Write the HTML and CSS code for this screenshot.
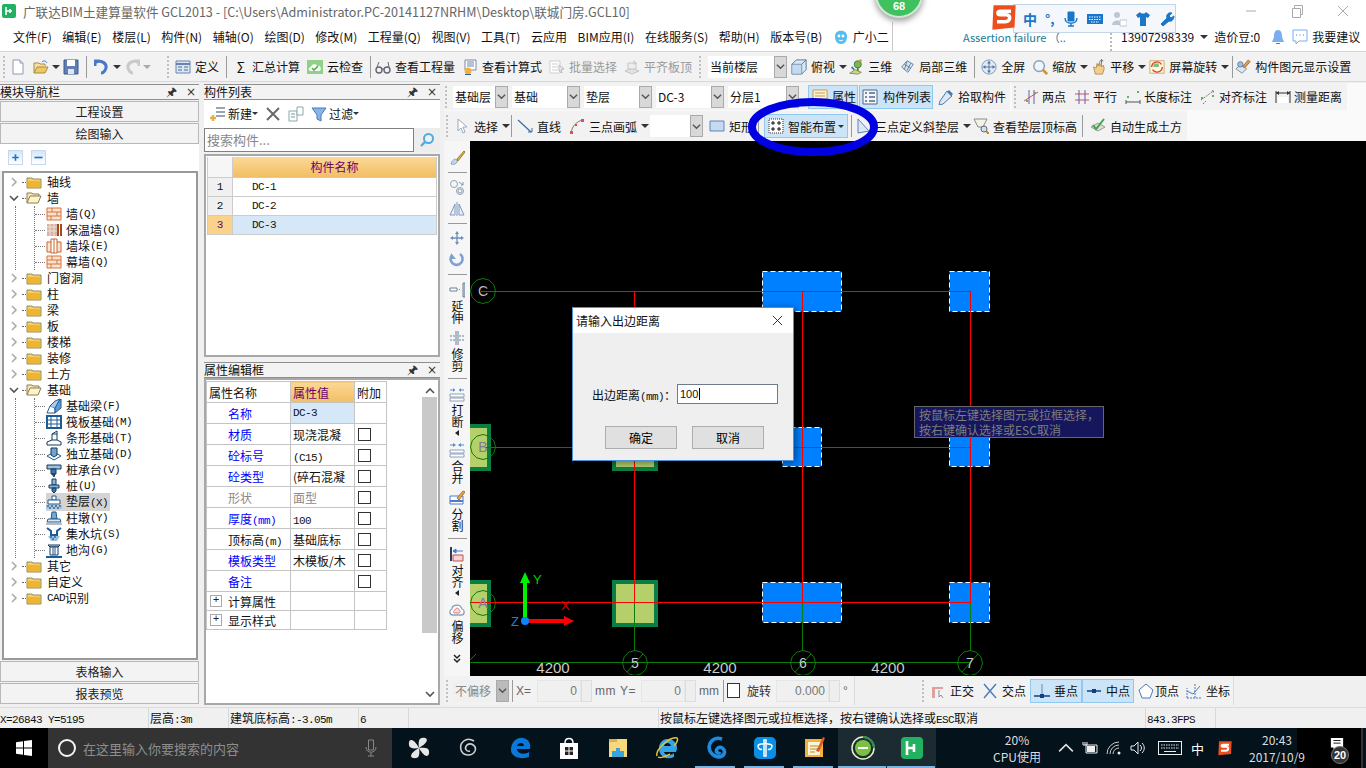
FILE: index.html

```html
<!DOCTYPE html>
<html lang="zh-CN">
<head>
  <meta charset="UTF-8" />
  <title>广联达BIM土建算量软件 GCL2013</title>
  <link rel="stylesheet" href="styles.css">
</head>
<body>
<svg class="defs" aria-hidden="true">
  <symbol id="i-folder" viewBox="0 0 16 16"><path d="M1 4h5l1 1h8v9H1z" fill="#f4cf6a" stroke="#9a8a5a"/><path d="M2 7h12v6H2z" fill="#eeb52d"/></symbol>
  <symbol id="i-folder-open" viewBox="0 0 16 16"><path d="M1 13V3h5l1 1h6v2" fill="#fbe9b0" stroke="#8c7c55"/><path d="M1 13l3-7h11l-3 7z" fill="#fff3c9" stroke="#8c7c55"/></symbol>
  <symbol id="i-right" viewBox="0 0 10 10"><path d="M3 1l4 4-4 4" fill="none" stroke="#aaa" stroke-width="1.6"/></symbol>
  <symbol id="i-down" viewBox="0 0 10 10"><path d="M1 3l4 4 4-4" fill="none" stroke="#555" stroke-width="1.6"/></symbol>
  <symbol id="i-brick" viewBox="0 0 16 16"><path d="M1 2h14v12H1z" fill="#fbe3cd" stroke="#d9743c"/><path d="M1 6h14M1 10h14M6 2v4M11 6v4M5 10v4" stroke="#d9743c"/></symbol>
  <symbol id="i-insul" viewBox="0 0 16 16"><path d="M1 2h10v12H1z" fill="#d9b4a4"/><path d="M1 5h10M1 9h10M4 2v12M8 2v12" stroke="#f0e0d8"/><path d="M12 2v12M15 2v12" stroke="#a54a1e" stroke-width="2"/></symbol>
  <symbol id="i-pier" viewBox="0 0 16 16"><path d="M1 4h14v10H1z" fill="#fbe3cd" stroke="#c8642c"/><path d="M5 1h6v14H5z" fill="#fff" stroke="#c8642c"/><path d="M8 1v14" stroke="#c8642c"/></symbol>
  <symbol id="i-beam" viewBox="0 0 16 16"><path d="M1 15l3-7 5 2v5z" fill="#fff" stroke="#1d5b94"/><path d="M9 15V8l6-7v9z" fill="#5e9bd0" stroke="#1d5b94"/><path d="M4 8l5-5 5-2-5 9" fill="#a9cbe8" stroke="#1d5b94"/></symbol>
  <symbol id="i-raft" viewBox="0 0 16 16"><path d="M1 2h14v12H1z" fill="#fff" stroke="#1d5b94" stroke-width="2"/><path d="M5 2v12M11 2v12M1 6h14M1 10h14" stroke="#1d5b94"/></symbol>
  <symbol id="i-strip" viewBox="0 0 16 16"><path d="M1 15v-3l5-2V4l5-3v9l4 2v3z" fill="#fff" stroke="#123a5f"/><path d="M6 4h5M6 10h5" stroke="#123a5f"/></symbol>
  <symbol id="i-iso" viewBox="0 0 16 16"><path d="M1 10l7-4 7 4-7 4z" fill="#fff" stroke="#1d5b94"/><path d="M5 2h6v7l-3 2-3-2z" fill="#78a3c8" stroke="#123a5f"/></symbol>
  <symbol id="i-cap" viewBox="0 0 16 16"><path d="M1 3h14v4H1z" fill="#9cc0de" stroke="#123a5f"/><path d="M5 7h5v5H5zM6 12h3l-1 3z" fill="#3f75a8" stroke="#123a5f"/></symbol>
  <symbol id="i-pile" viewBox="0 0 16 16"><path d="M6 1h4v6H6z" fill="#8db5d8" stroke="#123a5f"/><path d="M3 7h10v3H3z" fill="#8db5d8" stroke="#123a5f"/><path d="M6 10h4v3l-2 2-2-2z" fill="#3f75a8" stroke="#123a5f"/></symbol>
  <symbol id="i-pad" viewBox="0 0 16 16"><path d="M6 2h4v4H6z" fill="#fff" stroke="#1d5b94"/><path d="M2 6h12v4H2z" fill="#fff" stroke="#1d5b94"/><path d="M0 11h16v4H0z" fill="#a6c5e0"/><path d="M1 12h2M5 12h2M9 12h2M13 12h2M3 14h2M7 14h2M11 14h2" stroke="#123a5f"/></symbol>
  <symbol id="i-base" viewBox="0 0 16 16"><path d="M6 2h4l1 7H5z" fill="#7ba6cc" stroke="#1d5b94"/><path d="M2 9h12l1 3H1z" fill="#dbe8f3" stroke="#1d5b94"/><path d="M0 13h16v2H0z" fill="#bbb"/></symbol>
  <symbol id="i-sump" viewBox="0 0 16 16"><path d="M1 2l4 3v4h6V5l4-3" fill="none" stroke="#1d5b94" stroke-width="2"/><path d="M2 10h12l-3 5H5z" fill="#9cc0de"/><path d="M4 11h2M8 11h2M6 13h2" stroke="#123a5f"/></symbol>
  <symbol id="i-trench" viewBox="0 0 16 16"><path d="M2 3h12l-2 2H4z" fill="#cfe0ef" stroke="#123a5f"/><path d="M4 5h8v8H4z" fill="#fff" stroke="#123a5f"/><path d="M0 14h16v2H0z" fill="#1d5b94"/><path d="M7 5v8M9 5v8" stroke="#1d5b94"/></symbol>

  <symbol id="i-doc" viewBox="0 0 16 16"><path d="M3 1h7l3 3v11H3z" fill="#fff" stroke="#8e9ab0"/><path d="M10 1v3h3" fill="#e6ecf6" stroke="#8e9ab0"/></symbol>
  <symbol id="i-open" viewBox="0 0 16 16"><path d="M1 14V4h5l1 1h5v2" fill="#f7e0a1" stroke="#a98b45"/><path d="M1 14l3-6h11l-3 6z" fill="#efc864" stroke="#a98b45"/><path d="M9 3c2-2 4-1 5 1" fill="none" stroke="#3f75c8"/></symbol>
  <symbol id="i-save" viewBox="0 0 16 16"><path d="M1 1h14v14H1z" fill="#5f7fb5" stroke="#3e5a8c"/><path d="M4 1h8v6H4z" fill="#fff"/><path d="M5 10h6v5H5z" fill="#dfe6f1"/></symbol>
  <symbol id="i-undo" viewBox="0 0 16 16"><path d="M6 2H1v5M2 3c5-2 11 1 10 6-1 3-3 5-5 5" fill="none" stroke="#4a78c8" stroke-width="3"/></symbol>
  <symbol id="i-redo" viewBox="0 0 16 16"><path d="M10 2h5v5M14 3c-5-2-11 1-10 6 1 3 3 5 5 5" fill="none" stroke="#c9c9c9" stroke-width="3"/></symbol>
  <symbol id="i-define" viewBox="0 0 16 16"><path d="M1 2h14v12H1z" fill="#dce7f5" stroke="#6684ad"/><path d="M1 5h14" stroke="#6684ad" stroke-width="2"/><path d="M3 8h4M3 11h4M9 8h4M9 11h4" stroke="#4b6a96"/></symbol>
  <symbol id="i-cloud" viewBox="0 0 16 16"><path d="M0 1h16v14H0z" fill="#8fd18a"/><path d="M4 12c-3 0-3-4 0-4 0-3 5-4 6-1 3-1 5 2 3 5z" fill="#fff"/><path d="M5 9l2 2 4-4" fill="none" stroke="#54ae4e" stroke-width="1.6"/></symbol>
  <symbol id="i-glass" viewBox="0 0 16 16"><circle cx="4" cy="11" r="3" fill="none" stroke="#667" stroke-width="1.4"/><circle cx="12" cy="11" r="3" fill="none" stroke="#667" stroke-width="1.4"/><path d="M7 10h2M2 8l2-5M14 8l-1-5" stroke="#667"/></symbol>
  <symbol id="i-calc" viewBox="0 0 16 16"><path d="M3 1h11v10H3z" fill="#fff" stroke="#7c8aa0"/><path d="M5 3h7M5 5h7M5 7h7" stroke="#6b84ad"/><circle cx="6" cy="12" r="3.4" fill="#f2b23c"/><path d="M3 15h6v1H3z" fill="#2f5f9f"/></symbol>
  <symbol id="i-batch" viewBox="0 0 16 16"><path d="M1 2h10v12H1z" fill="#fff" stroke="#cfcfcf"/><path d="M3 5h6M3 8h6M3 11h6" stroke="#cfcfcf"/><path d="M10 6l5 4-3 1 1 3-2-1-1-2z" fill="#e6e6e6" stroke="#bbb"/></symbol>
  <symbol id="i-flush" viewBox="0 0 16 16"><path d="M1 12l7-3 7 3-7 3z" fill="#e2e2e2" stroke="#c5c5c5"/><path d="M4 4h8v6H4z" fill="#eee" stroke="#c5c5c5"/><path d="M9 1l4 3-3 2z" fill="#ccc"/></symbol>
  <symbol id="i-cube" viewBox="0 0 18 18"><path d="M1 6l5-5h11v11l-5 5H1z" fill="#d8e7f5" stroke="#4d7196"/><path d="M1 6h11v11M12 6l5-5" fill="none" stroke="#4d7196"/><path d="M1 6h11v11H1z" fill="#b9d2ea" fill-opacity=".6"/></symbol>
  <symbol id="i-3d" viewBox="0 0 18 18"><circle cx="11" cy="6" r="4" fill="#78b85a" stroke="#3d7c2c"/><path d="M11 10v5" stroke="#8a5a2c" stroke-width="2"/><path d="M2 16l6-4 7 3-4 2z" fill="#c8d88a" stroke="#7a8a4a"/><path d="M4 9l3 3" stroke="#4a78c8" stroke-width="2"/><circle cx="14" cy="2" r="1.6" fill="#e59a34"/></symbol>
  <symbol id="i-part3d" viewBox="0 0 18 18"><path d="M3 9l6-7 7 4-6 9z" fill="#dbe6f2" stroke="#5a7a9c"/><path d="M6 6l7 4M9 3l-3 9M13 5l-4 8" stroke="#5a7a9c"/></symbol>
  <symbol id="i-full" viewBox="0 0 18 18"><circle cx="9" cy="9" r="8" fill="#dfeaf6" stroke="#7a92ad"/><path d="M9 3v12M3 9h12" stroke="#4a6f9c"/><path d="M9 2l-2 3h4zM9 16l-2-3h4zM2 9l3-2v4zM16 9l-3-2v4z" fill="#4a6f9c"/></symbol>
  <symbol id="i-zoom" viewBox="0 0 18 18"><circle cx="8" cy="8" r="6" fill="#eef4fb" stroke="#8aa0b8" stroke-width="1.6"/><path d="M12 12l5 5" stroke="#c8953a" stroke-width="3"/><path d="M5 6c1-1 2-2 4-2" stroke="#fff" fill="none"/></symbol>
  <symbol id="i-pan" viewBox="0 0 18 18"><path d="M4 9l2 8h8l2-6-1-4-2 2V5l-2 3V3L9 8 8 5 7 10z" fill="#f2cf90" stroke="#ad8b50"/><path d="M13 0v5M11 2h4" stroke="#666"/></symbol>
  <symbol id="i-rotate" viewBox="0 0 18 18"><path d="M1 2h16v14H1z" fill="#fff6dc" stroke="#c8a65a"/><path d="M3 9a6 6 0 0 1 11-3M15 9a6 6 0 0 1-11 3" fill="none" stroke="#d9453a" stroke-width="1.6"/><path d="M5 5h6v4H5z" fill="#7cc07a"/></symbol>
  <symbol id="i-display" viewBox="0 0 18 18"><path d="M1 11l5-4 7 4-5 5z" fill="#dfe6ee" stroke="#7a8a9c"/><path d="M9 8l6-7 2 2-6 7z" fill="#e59a54" stroke="#9c6a2c"/><circle cx="6" cy="6" r="3" fill="#9cc0de" stroke="#5a7a9c"/></symbol>
  <symbol id="i-prop" viewBox="0 0 16 16"><path d="M1 1h14v14H1z" fill="#fff3d4" stroke="#c89b4a"/><path d="M3 4h10M3 7h10M3 10h7" stroke="#c89b4a"/></symbol>
  <symbol id="i-list" viewBox="0 0 16 16"><path d="M1 1h14v14H1z" fill="#f3f6fa" stroke="#55677c"/><path d="M3 4h2M3 8h2M3 12h2M7 4h6M7 8h6M7 12h6" stroke="#4f6a8c" stroke-width="1.4"/></symbol>
  <symbol id="i-pick" viewBox="0 0 16 16"><path d="M9 2l5 5-9 8-4 1 1-4z" fill="#dbe9f7" stroke="#4b78ad"/><path d="M11 1l4 4-2 2-4-4z" fill="#4b78ad"/></symbol>
  <symbol id="i-two" viewBox="0 0 16 16"><path d="M1 12L15 3" stroke="#d9534f"/><path d="M6 1v14M11 1v14" stroke="#6a5ab0"/><path d="M3 11h2v2H3zM11 3h2v2h-2z" fill="#5fb35f"/></symbol>
  <symbol id="i-par" viewBox="0 0 16 16"><path d="M1 5h14M1 11h14" stroke="#c25a5a"/><path d="M5 1v14M11 1v14" stroke="#6a5ab0"/></symbol>
  <symbol id="i-len" viewBox="0 0 16 16"><path d="M1 11v4M15 11v4M1 13h14" stroke="#555"/><path d="M2 7h2v2H2zM12 2h2v2h-2z" fill="#5fb35f"/></symbol>
  <symbol id="i-aldim" viewBox="0 0 16 16"><path d="M1 11l11-8M3 15l3-3" stroke="#777" stroke-dasharray="2 1"/><path d="M1 8h2v2H1zM12 6h2v2h-2z" fill="#5fb35f"/><path d="M12 1l2 1-1 2z" fill="#555"/></symbol>
  <symbol id="i-meas" viewBox="0 0 16 16"><path d="M1 2v12M15 2v12M1 4h14" stroke="#333"/><path d="M1 4l3-2v4zM15 4l-3-2v4z" fill="#333"/><path d="M3 8h10v6H3z" fill="#fff"/></symbol>
  <symbol id="i-cursor" viewBox="0 0 16 16"><path d="M4 1v12l3-3 2 5 2-1-2-5h4z" fill="#fff" stroke="#9ab"/></symbol>
  <symbol id="i-line" viewBox="0 0 16 16"><path d="M1 2l13 12" stroke="#3a6ea5" stroke-width="1.3"/><path d="M11 14h4v-4" fill="none" stroke="#3a6ea5"/></symbol>
  <symbol id="i-arc" viewBox="0 0 16 16"><path d="M2 15C3 8 8 3 14 2" fill="none" stroke="#777"/><path d="M1 13h3v3H1zM12 1h3v3h-3z" fill="#d9534f"/><path d="M6 6h2v2H6z" fill="#d9534f"/></symbol>
  <symbol id="i-rect" viewBox="0 0 16 16"><path d="M1 3h14v10H1z" fill="#c5d9f2" stroke="#5f84b8"/></symbol>
  <symbol id="i-smart" viewBox="0 0 16 16"><path d="M1 1h14v14H1z" fill="#fff" stroke="#333" stroke-dasharray="1 1"/><path d="M5 3v4M3 5h4M11 3v4M9 5h4M5 9v4M3 11h4M11 9v4M9 11h4" stroke="#111"/></symbol>
  <symbol id="i-tri" viewBox="0 0 16 16"><path d="M3 1l11 12-11 2z" fill="#dbe9f7" stroke="#5f84b8"/></symbol>
  <symbol id="i-viewpad" viewBox="0 0 16 16"><path d="M1 1h13l-4 8H5z" fill="#f6f3e4" stroke="#889"/><circle cx="11" cy="11" r="3" fill="#cfe0ef" stroke="#667"/><path d="M13 13l3 3" stroke="#b5892c" stroke-width="2"/></symbol>
  <symbol id="i-auto" viewBox="0 0 16 16"><path d="M1 9l7 4 7-4-7-4z" fill="#ddd" stroke="#999"/><path d="M3 7l3 4 8-10" fill="none" stroke="#44a544" stroke-width="2"/></symbol>
  <symbol id="i-brush" viewBox="0 0 16 16"><path d="M2 14c1-4 4-6 6-4 1 3-2 5-6 4z" fill="#c9d6e6" stroke="#8c9db5"/><path d="M8 9l7-8 1 1-7 9z" fill="#e3b04e" stroke="#a57c28"/></symbol>
  <symbol id="i-circ" viewBox="0 0 16 16"><circle cx="5" cy="5" r="3.5" fill="none" stroke="#8fa0b5"/><circle cx="11" cy="12" r="3.5" fill="none" stroke="#8fa0b5"/><circle cx="11" cy="12" r="2" fill="none" stroke="#8fa0b5"/><path d="M10 3l4 3M14 3v3h-2" fill="none" stroke="#7f97bd"/></symbol>
  <symbol id="i-mirror" viewBox="0 0 16 16"><path d="M8 1v14" stroke="#7f97bd"/><path d="M6 3v11H1zM10 3v11h5z" fill="#eaf0f8" stroke="#7f97bd"/></symbol>
  <symbol id="i-move" viewBox="0 0 16 16"><path d="M8 1l-2 3h4zM8 15l-2-3h4zM1 8l3-2v4zM15 8l-3-2v4z" fill="#6d8db8"/><path d="M8 3v10M3 8h10" stroke="#6d8db8" stroke-width="1.3"/></symbol>
  <symbol id="i-rot" viewBox="0 0 16 16"><path d="M3 3a6 6 0 1 0 8-1" fill="none" stroke="#7ea1d2" stroke-width="2.6"/><path d="M2 1v6h5z" fill="#7ea1d2"/></symbol>
  <symbol id="i-ext" viewBox="0 0 16 16"><path d="M1 6h7v3H1z" fill="#fff" stroke="#6d7f98"/><path d="M10 7.5h2" stroke="#6d7f98" stroke-dasharray="1 1"/><path d="M14 1v14h2V1z" fill="#c8d6e8" stroke="#6d7f98"/></symbol>
  <symbol id="i-trim" viewBox="0 0 16 16"><path d="M1 6h5M1 10h5M10 6h5M10 10h5" stroke="#6d7f98" stroke-dasharray="2 1"/><path d="M7 1v14M9 1v14" stroke="#6d7f98"/></symbol>
  <symbol id="i-break" viewBox="0 0 16 16"><path d="M1 8h14v3H1zM1 12h14v3H1z" fill="#fff" stroke="#8ea0b8"/><path d="M1 4h5M10 4h5" stroke="#5b8ccc"/><path d="M6 4L4 2v4zM10 4l2-2v4z" fill="#5b8ccc"/></symbol>
  <symbol id="i-merge" viewBox="0 0 16 16"><path d="M1 8h14v3H1zM1 12h14v3H1z" fill="#fff" stroke="#8ea0b8"/><path d="M1 3h5M10 3h5" stroke="#5b8ccc"/><path d="M7 3L4 1v4zM9 3l3-2v4z" fill="#5b8ccc"/></symbol>
  <symbol id="i-split" viewBox="0 0 16 16"><path d="M1 6h13v8H1z" fill="#fff" stroke="#4a7bd0"/><path d="M1 11h13" stroke="#4a7bd0" stroke-width="2"/><path d="M8 8l6-7 2 1-6 8z" fill="#e8a64a" stroke="#a8782c"/></symbol>
  <symbol id="i-align" viewBox="0 0 16 16"><path d="M2 1v14" stroke="#333a55" stroke-width="2"/><path d="M4 9h10v6H4z" fill="#f2d4d4" stroke="#c05050"/><path d="M4 5h10M4 5l3-2v4z" stroke="#4a7bd0" fill="#4a7bd0"/></symbol>
  <symbol id="i-offset" viewBox="0 0 16 16"><path d="M4 13c-4 0-4-5-1-6 0-4 8-6 10 0 3 1 3 6-1 6z" fill="#fff" stroke="#8ca0b8" stroke-width="1.3"/><path d="M6 11c-2 0-2-2 0-3 1-3 4-2 4 0 2 1 1 3 0 3z" fill="#fbdcdc" stroke="#d77"/></symbol>
  <symbol id="i-ortho" viewBox="0 0 16 16"><path d="M2 1v3h11v2H5v9H2z" fill="#e0a09c"/><path d="M9 7v7l2-2 2 3" fill="#fff" stroke="#889"/></symbol>
  <symbol id="i-cross" viewBox="0 0 16 16"><path d="M2 1l12 14M14 1L2 15" stroke="#4a7bb8" stroke-width="1.4"/></symbol>
  <symbol id="i-perp" viewBox="0 0 16 16"><path d="M0 13h16" stroke="#123f80" stroke-width="1.5"/><path d="M8 1v12" stroke="#5a8ac8"/><path d="M6 11h4v4H6z" fill="#123f80"/></symbol>
  <symbol id="i-mid" viewBox="0 0 16 16"><path d="M1 8h14" stroke="#123f80" stroke-width="1.5"/><path d="M6 6h4v4H6z" fill="#123f80"/></symbol>
  <symbol id="i-vertex" viewBox="0 0 16 16"><path d="M8 1l7 6-3 8H4L1 7z" fill="#fff" stroke="#4a7bb8"/></symbol>
  <symbol id="i-coord" viewBox="0 0 16 16"><path d="M1 15V5M1 15h14M9 15V1" stroke="#4a7bb8" stroke-dasharray="2 1"/><path d="M1 8l6 3 7-8" fill="none" stroke="#4a7bb8"/></symbol>
  <symbol id="i-sogou" viewBox="0 0 24 24"><path d="M3 2h19l-1 19-19 2z" fill="#ec4e1d"/><path d="M18 7H9c-3 0-3 3 0 3h5c4 0 4 6-1 6H6" fill="none" stroke="#fff" stroke-width="3"/></symbol>
  <symbol id="i-win" viewBox="0 0 16 16"><path d="M0 2.2l7-1V7.6H0zM8 1l8-1v7.6H8zM0 8.4h7v6.4l-7-1zM8 8.4h8V16l-8-1.1z" fill="#fff"/></symbol>
</svg>

<div class="app">
  <header class="titlebar">
    <svg class="app-logo" viewBox="0 0 14 14"><rect width="14" height="14" rx="2" fill="#22b161"/><path d="M4 3v8M4 7h6M8 5v4" stroke="#fff" stroke-width="1.6" fill="none"/></svg>
    <span class="title-text">广联达BIM土建算量软件 GCL2013 - [C:\Users\Administrator.PC-20141127NRHM\Desktop\联城门房.GCL10]</span>
    <div class="win-btns">
      <svg viewBox="0 0 46 20"><path d="M18 10h10" stroke="#aaa"/></svg>
      <svg viewBox="0 0 46 20"><path d="M18.500 7.500h8v9h-8zM20.500 7.500v-3h8v9h-2" fill="none" stroke="#aaa"/></svg>
      <svg viewBox="0 0 46 20"><path d="M18 5l10 10M28 5L18 15" stroke="#aaa"/></svg>
    </div>
  </header>

  <nav class="menubar">
    <div class="menu">
      <span>文件(F)</span><span>编辑(E)</span><span>楼层(L)</span><span>构件(N)</span><span>辅轴(O)</span><span>绘图(D)</span><span>修改(M)</span><span>工程量(Q)</span><span>视图(V)</span><span>工具(T)</span><span>云应用</span><span>BIM应用(I)</span><span>在线服务(S)</span><span>帮助(H)</span><span>版本号(B)</span>
      <span class="helper"><svg class="ic16" viewBox="0 0 16 16"><path d="M2 7c0-7 12-7 12 0 0 5-2 8-6 8S2 12 2 7z" fill="#56bdf0"/><circle cx="6" cy="7" r="1.400" fill="#fff"/><circle cx="10" cy="7" r="1.400" fill="#fff"/><path d="M6 11c1 1 3 1 4 0" stroke="#fff" fill="none"/></svg>广小二</span>
    </div>
    <div class="notice">Assertion failure （..</div>
    <div class="account">
      <span>13907298339</span><i class="caret"></i><span>造价豆:0</span>
      <svg class="ic16 bell" viewBox="0 0 16 16"><path d="M8 1c3 0 4 3 4 6s2 5 2 6H2c0-1 2-3 2-6s1-6 4-6z" fill="#7aaef0"/><path d="M6 14h4v1H6z" fill="#4a7bc8"/></svg>
      <svg class="ic16 chat" viewBox="0 0 16 16"><path d="M1 1h14v11H7l-3 3v-3H1z" fill="#fff" stroke="#7aaef0"/><path d="M4 6h1M7.500 6h1M11 6h1" stroke="#4a7bc8"/></svg>
      <span>我要建议</span>
    </div>
  </nav>

  <div class="toolbar main-tools">
    <i class="grip"></i>
    <span class="quick">
      <svg class="ic16"><use href="#i-doc"/></svg>
      <svg class="ic16 ml4"><use href="#i-open"/></svg><i class="caret"></i>
      <svg class="ic16"><use href="#i-save"/></svg>
      <i class="sep"></i>
      <svg class="ic16"><use href="#i-undo"/></svg><i class="caret"></i>
      <svg class="ic16"><use href="#i-redo"/></svg><i class="caret off"></i>
    </span>
    <i class="grip"></i>
    <span class="tool"><svg class="ic16"><use href="#i-define"/></svg>定义</span><i class="sep"></i>
    <span class="tool"><b class="sigma">Σ</b>汇总计算</span>
    <span class="tool"><svg class="ic16"><use href="#i-cloud"/></svg>云检查</span><i class="sep"></i>
    <span class="tool shift-a"><svg class="ic16"><use href="#i-glass"/></svg>查看工程量</span>
    <span class="tool"><svg class="ic16"><use href="#i-calc"/></svg>查看计算式</span>
    <span class="tool off"><svg class="ic16"><use href="#i-batch"/></svg>批量选择</span>
    <span class="tool off"><svg class="ic16"><use href="#i-flush"/></svg>平齐板顶</span>
    <i class="grip gap-l"></i>
    <span class="combo floor"><em>当前楼层</em><b class="arrow"><svg viewBox="0 0 10 10"><use href="#i-down"/></svg></b></span>
    <span class="tool"><svg class="ic16"><use href="#i-cube"/></svg>俯视<i class="caret"></i></span>
    <span class="tool nudge2"><svg class="ic16"><use href="#i-3d"/></svg>三维</span>
    <span class="tool"><svg class="ic16"><use href="#i-part3d"/></svg>局部三维</span><i class="sep"></i>
    <span class="tool nudge1"><svg class="ic16"><use href="#i-full"/></svg>全屏</span>
    <span class="tool"><svg class="ic16"><use href="#i-zoom"/></svg>缩放<i class="caret"></i></span>
    <span class="tool nudge1"><svg class="ic16"><use href="#i-pan"/></svg>平移<i class="caret"></i></span>
    <span class="tool"><svg class="ic16"><use href="#i-rotate"/></svg>屏幕旋转<i class="caret"></i></span><i class="sep"></i>
    <span class="tool nudge5"><svg class="ic16"><use href="#i-display"/></svg>构件图元显示设置</span>
  </div>

  <main class="workspace">
    <aside class="nav-panel">
      <div class="pane-head"><span>模块导航栏</span><span class="pane-ctl"><b>🖈</b><b>×</b></span></div>
      <button class="nav-btn">工程设置</button>
      <button class="nav-btn">绘图输入</button>
      <div class="tree-tools">
        <span class="sq"><svg viewBox="0 0 16 16"><path d="M8 4v8M4 8h8" stroke="#1a76c8" stroke-width="2"/></svg></span>
        <span class="sq"><svg viewBox="0 0 16 16"><path d="M3 8h10" stroke="#1a76c8" stroke-width="2"/></svg></span>
      </div>
      <div class="tree">
        <div class="node"><svg class="chev"><use href="#i-right"/></svg><i class="dot"></i><svg class="ic16"><use href="#i-folder"/></svg>轴线</div>
        <div class="node"><svg class="chev"><use href="#i-down"/></svg><i class="dot"></i><svg class="ic16"><use href="#i-folder-open"/></svg>墙</div>
        <div class="branch"><div class="twig">
          <div class="leaf"><svg class="ic16"><use href="#i-brick"/></svg>墙<span class="key">(Q)</span></div>
          <div class="leaf"><svg class="ic16"><use href="#i-insul"/></svg>保温墙<span class="key">(Q)</span></div>
          <div class="leaf"><svg class="ic16"><use href="#i-pier"/></svg>墙垛<span class="key">(E)</span></div>
          <div class="leaf"><svg class="ic16"><use href="#i-brick"/></svg>幕墙<span class="key">(Q)</span></div>
        </div></div>
        <div class="node"><svg class="chev"><use href="#i-right"/></svg><i class="dot"></i><svg class="ic16"><use href="#i-folder"/></svg>门窗洞</div>
        <div class="node"><svg class="chev"><use href="#i-right"/></svg><i class="dot"></i><svg class="ic16"><use href="#i-folder"/></svg>柱</div>
        <div class="node"><svg class="chev"><use href="#i-right"/></svg><i class="dot"></i><svg class="ic16"><use href="#i-folder"/></svg>梁</div>
        <div class="node"><svg class="chev"><use href="#i-right"/></svg><i class="dot"></i><svg class="ic16"><use href="#i-folder"/></svg>板</div>
        <div class="node"><svg class="chev"><use href="#i-right"/></svg><i class="dot"></i><svg class="ic16"><use href="#i-folder"/></svg>楼梯</div>
        <div class="node"><svg class="chev"><use href="#i-right"/></svg><i class="dot"></i><svg class="ic16"><use href="#i-folder"/></svg>装修</div>
        <div class="node"><svg class="chev"><use href="#i-right"/></svg><i class="dot"></i><svg class="ic16"><use href="#i-folder"/></svg>土方</div>
        <div class="node"><svg class="chev"><use href="#i-down"/></svg><i class="dot"></i><svg class="ic16"><use href="#i-folder-open"/></svg>基础</div>
        <div class="branch"><div class="twig">
          <div class="leaf"><svg class="ic16"><use href="#i-beam"/></svg>基础梁<span class="key">(F)</span></div>
          <div class="leaf"><svg class="ic16"><use href="#i-raft"/></svg>筏板基础<span class="key">(M)</span></div>
          <div class="leaf"><svg class="ic16"><use href="#i-strip"/></svg>条形基础<span class="key">(T)</span></div>
          <div class="leaf"><svg class="ic16"><use href="#i-iso"/></svg>独立基础<span class="key">(D)</span></div>
          <div class="leaf"><svg class="ic16"><use href="#i-cap"/></svg>桩承台<span class="key">(V)</span></div>
          <div class="leaf"><svg class="ic16"><use href="#i-pile"/></svg>桩<span class="key">(U)</span></div>
          <div class="leaf selected"><svg class="ic16"><use href="#i-pad"/></svg><span class="sel-text">垫层<span class="key">(X)</span></span></div>
          <div class="leaf"><svg class="ic16"><use href="#i-base"/></svg>柱墩<span class="key">(Y)</span></div>
          <div class="leaf"><svg class="ic16"><use href="#i-sump"/></svg>集水坑<span class="key">(S)</span></div>
          <div class="leaf"><svg class="ic16"><use href="#i-trench"/></svg>地沟<span class="key">(G)</span></div>
        </div></div>
        <div class="node"><svg class="chev"><use href="#i-right"/></svg><i class="dot"></i><svg class="ic16"><use href="#i-folder"/></svg>其它</div>
        <div class="node"><svg class="chev"><use href="#i-right"/></svg><i class="dot"></i><svg class="ic16"><use href="#i-folder"/></svg>自定义</div>
        <div class="node"><svg class="chev"><use href="#i-right"/></svg><i class="dot"></i><svg class="ic16"><use href="#i-folder"/></svg><span class="key">CAD</span>识别</div>
      </div>
      <button class="nav-btn">表格输入</button>
      <button class="nav-btn">报表预览</button>
    </aside>

    <section class="comp-panel">
      <div class="pane-head"><span>构件列表</span><span class="pane-ctl"><b>🖈</b><b>×</b></span></div>
      <div class="list-tools">
        <span class="tool"><svg class="ic16" viewBox="0 0 16 16"><path d="M6 2h9M6 6h9M6 10h9" stroke="#7a8799" stroke-width="1.4"/><path d="M3 9v6M0 12h6" stroke="#e3b04e" stroke-width="2.400"/></svg>新建<i class="caret small"></i></span>
        <svg class="ic16" viewBox="0 0 16 16"><path d="M2 2l12 12M14 2L2 14" stroke="#6a6a6a" stroke-width="2"/></svg>
        <svg class="ic16" viewBox="0 0 16 16"><path d="M1 5h8v10H1z" fill="#fff" stroke="#8aa"/><path d="M9 1h6v8H9z" fill="#fff" stroke="#8aa"/><path d="M3 8h4M3 11h4" stroke="#7a8fb0"/></svg>
        <span class="tool"><svg class="ic16" viewBox="0 0 16 16"><path d="M1 2h14L10 9v6l-4-2V9z" fill="#8ab4e8" stroke="#4a78b8"/></svg>过滤<i class="caret small"></i></span>
      </div>
      <div class="search"><span class="search-box">搜索构件...</span><span class="search-btn"><svg class="ic16" viewBox="0 0 16 16"><circle cx="9.500" cy="6.500" r="4.500" fill="#e8f4fc" stroke="#55a8e0" stroke-width="2"/><path d="M6 10l-4 4" stroke="#55a8e0" stroke-width="2.400"/></svg></span></div>
      <div class="comp-list">
        <div class="list-row head"><span class="idx"></span><span class="name">构件名称</span></div>
        <div class="list-row"><span class="idx">1</span><span class="name key">DC-1</span></div>
        <div class="list-row"><span class="idx">2</span><span class="name key">DC-2</span></div>
        <div class="list-row on"><span class="idx">3</span><span class="name key">DC-3</span></div>
      </div>
      <div class="pane-head prop-head"><span>属性编辑框</span><span class="pane-ctl"><b>🖈</b><b>×</b></span></div>
      <div class="prop-box">
        <table class="props">
          <tr class="p-head"><th>属性名称</th><th class="gold">属性值</th><th>附加</th></tr>
          <tr><td class="blue">名称</td><td class="val sel key">DC-3</td><td></td></tr>
          <tr><td class="blue">材质</td><td class="val">现浇混凝</td><td><i class="box"></i></td></tr>
          <tr><td class="blue">砼标号</td><td class="val"><span class="key">(C15)</span></td><td><i class="box"></i></td></tr>
          <tr><td class="blue">砼类型</td><td class="val">(碎石混凝</td><td><i class="box"></i></td></tr>
          <tr><td class="gray">形状</td><td class="val gray">面型</td><td><i class="box"></i></td></tr>
          <tr><td class="blue">厚度<span class="key">(mm)</span></td><td class="val"><span class="key">100</span></td><td><i class="box"></i></td></tr>
          <tr><td>顶标高<span class="key">(m)</span></td><td class="val">基础底标</td><td><i class="box"></i></td></tr>
          <tr><td class="blue">模板类型</td><td class="val">木模板/木</td><td><i class="box"></i></td></tr>
          <tr><td class="blue">备注</td><td class="val"></td><td><i class="box"></i></td></tr>
          <tr class="short"><td><i class="plus">+</i>计算属性</td><td></td><td></td></tr>
          <tr class="short"><td><i class="plus">+</i>显示样式</td><td></td><td></td></tr>
        </table>
        <div class="vscroll">
          <svg viewBox="0 0 10 10"><path d="M1 7l4-4 4 4" fill="none" stroke="#555" stroke-width="1.600"/></svg>
          <span class="thumb"></span>
          <svg class="end" viewBox="0 0 10 10"><path d="M1 3l4 4 4-4" fill="none" stroke="#555" stroke-width="1.600"/></svg>
        </div>
      </div>
    </section>

    <section class="draw-panel">
      <div class="strip-row">
        <div class="toolbar strip first">
          <i class="grip"></i>
          <span class="combo c1"><em>基础层</em><b class="arrow"><svg viewBox="0 0 10 10"><use href="#i-down"/></svg></b></span>
          <span class="combo c2"><em>基础</em><b class="arrow"><svg viewBox="0 0 10 10"><use href="#i-down"/></svg></b></span>
          <span class="combo c2"><em>垫层</em><b class="arrow"><svg viewBox="0 0 10 10"><use href="#i-down"/></svg></b></span>
          <span class="combo c2"><em>DC-3</em><b class="arrow"><svg viewBox="0 0 10 10"><use href="#i-down"/></svg></b></span>
          <span class="combo c3"><em>分层1</em><b class="arrow"><svg viewBox="0 0 10 10"><use href="#i-down"/></svg></b></span>
          <span class="tool hi attr"><svg class="ic16"><use href="#i-prop"/></svg>属性</span>
          <span class="tool hi list-on"><svg class="ic16"><use href="#i-list"/></svg>构件列表</span>
          <span class="tool ml1"><svg class="ic16"><use href="#i-pick"/></svg>拾取构件</span>
        </div>
        <div class="toolbar strip dims">
          <i class="grip"></i>
          <span class="tool"><svg class="ic16"><use href="#i-two"/></svg>两点</span>
          <span class="tool"><svg class="ic16"><use href="#i-par"/></svg>平行</span>
          <span class="tool"><svg class="ic16"><use href="#i-len"/></svg>长度标注</span>
          <span class="tool"><svg class="ic16"><use href="#i-aldim"/></svg>对齐标注</span>
          <span class="tool"><svg class="ic16"><use href="#i-meas"/></svg>测量距离</span>
        </div>
      </div>
      <div class="toolbar strip second">
        <i class="grip"></i>
        <span class="tool"><svg class="ic16"><use href="#i-cursor"/></svg>选择<i class="caret"></i></span><i class="sep"></i>
        <span class="tool"><svg class="ic16"><use href="#i-line"/></svg>直线</span>
        <span class="tool ml4"><svg class="ic16"><use href="#i-arc"/></svg>三点画弧<i class="caret"></i></span>
        <span class="combo c4 ml1"><em></em><b class="arrow"><svg viewBox="0 0 10 10"><use href="#i-down"/></svg></b></span>
        <span class="tool ml2"><svg class="ic16"><use href="#i-rect"/></svg>矩形</span><i class="sep"></i>
        <span class="tool hi smart"><svg class="ic16"><use href="#i-smart"/></svg>智能布置<i class="caret small"></i></span><i class="sep"></i>
        <span class="tool tri"><svg class="ic16"><use href="#i-tri"/></svg>三点定义斜垫层<i class="caret"></i></span>
        <span class="tool ml2"><svg class="ic16"><use href="#i-viewpad"/></svg>查看垫层顶标高</span><i class="sep"></i>
        <span class="tool ml2"><svg class="ic16"><use href="#i-auto"/></svg>自动生成土方</span>
      </div>

      <div class="drawing">
        <div class="side-tools">
          <svg class="ic16"><use href="#i-brush"/></svg><i class="hr"></i>
          <svg class="ic16"><use href="#i-circ"/></svg>
          <svg class="ic16"><use href="#i-mirror"/></svg><i class="hr"></i>
          <svg class="ic16"><use href="#i-move"/></svg>
          <svg class="ic16"><use href="#i-rot"/></svg><i class="hr"></i>
          <span class="vtool"><svg class="ic16"><use href="#i-ext"/></svg><span class="vtext">延伸</span></span>
          <span class="vtool"><svg class="ic16"><use href="#i-trim"/></svg><span class="vtext">修剪</span></span><i class="hr"></i>
          <span class="vtool"><svg class="ic16"><use href="#i-break"/></svg><span class="vtext">打断</span><i class="tick"></i></span>
          <span class="vtool"><svg class="ic16"><use href="#i-merge"/></svg><span class="vtext">合并</span></span>
          <span class="vtool"><svg class="ic16"><use href="#i-split"/></svg><span class="vtext">分割</span></span><i class="hr"></i>
          <span class="vtool"><svg class="ic16"><use href="#i-align"/></svg><span class="vtext">对齐</span><i class="tick"></i></span>
          <span class="vtool"><svg class="ic16"><use href="#i-offset"/></svg><span class="vtext">偏移</span></span>
          <svg class="more" viewBox="0 0 10 10"><path d="M2 1l3 3 3-3M2 5l3 3 3-3" fill="none" stroke="#222" stroke-width="1.500"/></svg>
        </div>
        <div class="canvas">
          <svg class="plan" viewBox="470 141 896 534">
            <defs><polygon id="bubble" points="12.500,0 10.800,6.250 6.250,10.800 0,12.500 -6.250,10.800 -10.800,6.250 -12.500,0 -10.800,-6.250 -6.250,-10.800 0,-12.500 6.250,-10.800 10.800,-6.250" fill="none" stroke="#0a7d0a"/></defs>
            <g fill="#0a7f45">
              <rect x="470" y="424" width="21" height="47"/><rect x="612" y="424" width="46" height="47"/>
              <rect x="470" y="580" width="21" height="47"/><rect x="612" y="580" width="46" height="47"/>
            </g>
            <g fill="#b5cf6b">
              <rect x="470" y="428" width="17" height="39"/><rect x="616" y="428" width="38" height="39"/>
              <rect x="470" y="584" width="17" height="39"/><rect x="616" y="584" width="38" height="39"/>
            </g>
            <g fill="#007fff" stroke="#fff" stroke-dasharray="5 3">
              <rect x="762.500" y="271.500" width="79" height="40"/><rect x="949.500" y="271.500" width="40" height="40"/>
              <rect x="782.500" y="427.500" width="39" height="39"/><rect x="949.500" y="427.500" width="40" height="39"/>
              <rect x="762.500" y="582.500" width="79" height="40"/><rect x="949.500" y="582.500" width="40" height="40"/>
            </g>
            <g stroke="#ff0000" fill="none" shape-rendering="crispEdges">
              <path d="M481 291.500H970.500M486 447.500H970.500M470 602.500H970.500"/>
              <path d="M634.500 291V602M802.500 291V602M970.500 291V602"/>
            </g>
            <g stroke="#0a7d0a" fill="none">
              <path d="M470 662.500H970M634.500 603V651M802.500 603V651M970.500 603V651M470 660l6-6"/>
              <path d="M627 672l16-18M795 672l16-18M962 672l16-18"/>
            </g>
            <use href="#bubble" x="483" y="291"/><use href="#bubble" x="483" y="447"/><use href="#bubble" x="483" y="603"/>
            <use href="#bubble" x="635" y="663"/><use href="#bubble" x="803" y="663"/><use href="#bubble" x="970" y="663"/>
            <g class="axis-label">
              <text x="483" y="296" fill="#bbb">C</text><text x="483" y="452" fill="#7d7d98">B</text><text x="483" y="608" fill="#7d7d98">A</text>
              <text x="635" y="668" fill="#ccc">5</text><text x="803" y="668" fill="#ccc">6</text><text x="970" y="668" fill="#ccc">7</text>
            </g>
            <g class="dim-label" fill="#ccc">
              <text x="553" y="673">4200</text><text x="720" y="673">4200</text><text x="888" y="673">4200</text>
            </g>
            <path d="M523 620V583h-3l5-11 5 11h-3v37z" fill="#00f000"/>
            <path d="M525 619h39v-3l10 5-10 5v-3h-39z" fill="#ff0000"/>
            <circle cx="525" cy="621" r="4" fill="#0a84ff"/>
            <g class="ucs-label">
              <text x="533" y="584" fill="#00d000">Y</text><text x="561" y="610" fill="#e00000">X</text><text x="511" y="626" fill="#1a7fe0">Z</text>
            </g>
          </svg>
          <div class="hint">按鼠标左键选择图元或拉框选择，<br>按右键确认选择或ESC取消</div>
          <div class="dialog">
            <div class="dlg-title"><span>请输入出边距离</span><svg viewBox="0 0 12 12"><path d="M1 1l10 10M11 1L1 11" stroke="#222"/></svg></div>
            <div class="dlg-body">
              <div class="dlg-field"><label>出边距离<span class="key">(mm)</span>：</label><span class="dlg-input">100<i></i></span></div>
              <div class="dlg-btns"><button>确定</button><button>取消</button></div>
            </div>
          </div>
        </div>
      </div>

      <div class="snapbar">
        <div class="toolbar snap-left">
          <i class="grip"></i>
          <span class="combo c5"><em>不偏移</em><b class="arrow"><svg viewBox="0 0 10 10"><use href="#i-down"/></svg></b></span><i class="sep"></i>
          <span class="fld-label fx">X=</span><span class="spin"><em>0</em><b></b></span><span class="fld-label fy">mm Y=</span><span class="spin"><em>0</em><b></b></span><span class="fld-label fm">mm</span><i class="sep"></i>
          <i class="box lg"></i><span class="rot">旋转</span><span class="spin wide"><em>0.000</em><b></b></span><span class="fld-label">°</span>
        </div>
        <div class="toolbar snap-right">
          <i class="grip"></i>
          <span class="tool"><svg class="ic16"><use href="#i-ortho"/></svg>正交</span>
          <span class="tool ml4"><svg class="ic16"><use href="#i-cross"/></svg>交点</span>
          <span class="tool hi"><svg class="ic16"><use href="#i-perp"/></svg>垂点</span>
          <span class="tool hi tight"><svg class="ic16"><use href="#i-mid"/></svg>中点</span>
          <span class="tool vertex"><svg class="ic16"><use href="#i-vertex"/></svg>顶点</span>
          <span class="tool ml3"><svg class="ic16"><use href="#i-coord"/></svg>坐标</span>
        </div>
      </div>
    </section>
  </main>

  <footer class="statusbar">
    <span class="cell s1"><span class="key">X=26843 Y=5195</span></span>
    <span class="cell s2">层高<span class="key">:3m</span></span>
    <span class="cell s3">建筑底标高<span class="key">:-3.05m</span></span>
    <span class="cell s4"><span class="key">6</span></span>
    <span class="cell s5"></span>
    <span class="cell s6">按鼠标左键选择图元或拉框选择，按右键确认选择或<span class="key">ESC</span>取消</span>
    <span class="cell s7"><span class="key">843.3FPS</span></span>
    <span class="cell s8"></span>
  </footer>

  <div class="taskbar">
    <span class="start"><svg class="ic16"><use href="#i-win"/></svg></span>
    <div class="task-search">
      <svg class="cortana" viewBox="0 0 20 20"><circle cx="10" cy="10" r="8" fill="none" stroke="#f4f4f4" stroke-width="2"/></svg>
      <span>在这里输入你要搜索的内容</span>
      <svg class="mic" viewBox="0 0 12 18"><path d="M3.500 1h5v10h-5zM1 8c0 7 10 7 10 0M6 14v3M3 17h6" fill="none" stroke="#888"/></svg>
    </div>
    <div class="task-apps">
      <span class="app-i"><svg viewBox="0 0 24 24"><path d="M12 12C6 1 1 3 2 9c0 3 4 4 10 3zM12 12C23 6 21 1 15 2c-3 0-4 4-3 10zM12 12c6 11 11 9 10 3 0-3-4-4-10-3zM12 12C1 18 3 23 9 22c3 0 4-4 3-10z" fill="#e6e6e6"/></svg></span>
      <span class="app-i"><svg viewBox="0 0 24 24"><path d="M18 5C10 0 3 7 5 14c2 6 11 7 14 1 2-5-4-9-8-6-3 3-1 7 3 6" fill="none" stroke="#d0d0d0" stroke-width="1.600"/></svg></span>
      <span class="app-i"><svg viewBox="0 0 24 24"><path d="M3 14C3 5 10 1 15 2c6 1 8 6 7 11H9c0 5 8 6 12 3v5c-8 3-18 0-18-7zM9 10h7c0-4-6-4-7 0z" fill="#0a78d7"/></svg></span>
      <span class="app-i"><svg viewBox="0 0 24 24"><path d="M3 7h18v16H3z" fill="#fff"/><path d="M8 7c0-6 8-6 8 0" fill="none" stroke="#fff" stroke-width="1.500"/><path d="M8 11h3.500v3.500H8zM12.500 11H16v3.500h-3.500zM8 15.500h3.500V19H8zM12.500 15.500H16V19h-3.500z" fill="#222"/></svg></span>
      <span class="app-i"><svg viewBox="0 0 24 24"><path d="M3 3h18v18H3z" fill="#f7d97b"/><path d="M3 3h8v3H3z" fill="#d9b04a"/><path d="M6 15h12v6H6z" fill="#39a3dd"/><path d="M10 12h4v4h-4z" fill="#39a3dd"/></svg></span>
      <span class="app-i"><svg viewBox="0 0 24 24"><path d="M4 12a9 9 0 1 1 17 4H9c1 4 7 4 10 1v4c-6 3-15 1-15-9zM9 10h7c-1-4-6-4-7 0z" fill="#35a4e6"/><path d="M2 20C0 14 15 0 22 2c2 2-2 7-3 8M3 21c3 2 10-2 12-3" fill="none" stroke="#e8c230" stroke-width="1.500"/></svg></span>
      <span class="app-i"><svg viewBox="0 0 24 24"><path d="M18 3C9 0 3 8 6 15c3 6 11 8 14 3 2-5-4-9-7-5-2 4 2 5 3 3" fill="none" stroke="#1e8be0" stroke-width="3.600"/></svg></span>
      <span class="app-i"><svg viewBox="0 0 24 24"><rect x="1" y="1" width="22" height="22" rx="5" fill="#0a8fe6"/><path d="M11 4h2v16h-2zM5 10c0-3 14-3 14 0s-3 4-4 3M5 10c0 3 3 4 4 3" fill="none" stroke="#fff" stroke-width="1.500"/></svg></span>
      <span class="app-i"><svg viewBox="0 0 24 24"><path d="M3 3h18v18H3z" fill="#f0b23c"/><path d="M6 6h12v13H6z" fill="#fdf4d8"/><path d="M8 10h8M8 13h8M8 16h5" stroke="#b58a2c"/><path d="M14 15L21 1l2 1-6 14z" fill="#d85b2c"/></svg></span>
      <span class="app-i active"><svg viewBox="0 0 24 24"><circle cx="12" cy="12" r="11" fill="none" stroke="#e6f2c8" stroke-width="1.500"/><circle cx="12" cy="12" r="8" fill="#7ac143"/><path d="M7 12h10" stroke="#fff" stroke-width="2"/><path d="M12 1c6 0 11 5 11 11" fill="none" stroke="#2a8f4a" stroke-width="2"/></svg></span>
      <span class="app-i active"><svg viewBox="0 0 24 24"><rect x="1" y="1" width="22" height="22" rx="4" fill="#22b161"/><path d="M7 5v14M7 12h7M14 8v8" stroke="#fff" stroke-width="2.600" fill="none"/></svg></span>
    </div>
    <div class="task-cpu"><span>20%</span><span>CPU使用</span></div>
    <div class="tray">
      <svg viewBox="0 0 14 14"><path d="M1 10l6-6 6 6" fill="none" stroke="#ddd" stroke-width="1.400"/></svg>
      <svg viewBox="0 0 16 14"><path d="M4 4h11v8H4z" fill="none" stroke="#eee"/><path d="M5 5h8v6H5z" fill="#eee"/><path d="M1 1v3h4V1M3 1v3" stroke="#eee" fill="none"/></svg>
      <svg viewBox="0 0 16 14"><path d="M1 13a12 12 0 0 1 12-12M4 13a9 9 0 0 1 9-9M7 13a6 6 0 0 1 6-6" fill="none" stroke="#ccc"/><circle cx="13" cy="12" r="1.500" fill="#eee"/></svg>
      <svg viewBox="0 0 16 14"><path d="M1 5h3l4-4v12l-4-4H1z" fill="none" stroke="#eee"/><path d="M10 4c2 2 2 4 0 6M12 2c3 3 3 7 0 10" fill="none" stroke="#eee"/></svg>
      <svg class="kbd" viewBox="0 0 24 14"><rect x=".5" y=".5" width="23" height="13" fill="none" stroke="#eee"/><path d="M3 4h18M3 7h18" stroke="#eee" stroke-dasharray="1.500 1"/><path d="M6 10.500h12" stroke="#eee"/></svg>
      <span class="zh">中</span>
      <svg viewBox="0 0 24 24"><use href="#i-sogou"/></svg>
    </div>
    <div class="clock"><span>20:43</span><span>2017/10/9</span></div>
    <div class="action-center">
      <svg viewBox="0 0 16 16"><path d="M1 1h14v11H7l-3 3v-3H1z" fill="#fff"/><path d="M4 4h8M4 7h8" stroke="#000"/></svg>
      <span class="badge">20</span>
    </div>
  </div>

  <div class="gauge"><span>68</span></div>
  <div class="ime">
    <svg class="ime-logo" viewBox="0 0 24 24"><use href="#i-sogou"/></svg>
    <span class="ime-bar">
      <b>中</b><b class="pun">°,</b>
      <svg viewBox="0 0 14 16"><path d="M4 1h6v9H4z" fill="#1a76c8" stroke="#1a76c8"/><path d="M1 7c0 7 12 7 12 0M7 12v3M4 15h6" fill="none" stroke="#1a76c8" stroke-width="1.400"/></svg>
      <svg viewBox="0 0 16 16"><path d="M0 3h16v10H0z" fill="#1a76c8"/><path d="M2 6h12M2 8.500h12M4 11h8" stroke="#fff" stroke-dasharray="1.500 1"/></svg>
      <svg viewBox="0 0 16 16"><circle cx="6" cy="4" r="3" fill="#bcc7d2"/><path d="M1 14c0-6 10-6 10 0z" fill="#bcc7d2"/><path d="M9 9h7v6H9z" fill="#fff" stroke="#bcc7d2"/></svg>
      <svg viewBox="0 0 16 16"><path d="M5 1L1 4l2 3 2-1v9h6V6l2 1 2-3-4-3c-1 2-5 2-6 0z" fill="#1a76c8"/></svg>
      <svg viewBox="0 0 16 16"><path d="M2 13l6-6c-1-3 1-6 5-5l-3 3 2 2 3-2c0 4-3 6-5 5l-6 5z" fill="#1a76c8" stroke="#1a76c8"/></svg>
    </span>
  </div>
  <svg class="ring" viewBox="0 0 136 64"><ellipse cx="68" cy="32" rx="61" ry="25" fill="none" stroke="#0000e0" stroke-width="8"/></svg>
</div>
</body>
</html>
```

FILE: styles.css

```css
* { box-sizing: border-box; }

html, body {
  margin: 0;
  height: 768px;
  overflow: hidden;
}

body {
  background: #f0f0f0;
  font-family: "Noto Sans CJK SC", "Liberation Sans", sans-serif;
  font-size: 12px;
  color: #111;
}

.defs { display: none; }

.app {
  position: relative;
  width: 1366px;
  height: 768px;
  display: flex;
  flex-direction: column;
  overflow: hidden;
}

.ic16 { width: 16px; height: 16px; flex-shrink: 0; }
.ml1 { margin-left: 1px; }
.ml2 { margin-left: 2px; }
.ml3 { margin-left: 3px; }
.ml4 { margin-left: 4px; }

.key {
  font-family: "Liberation Mono", monospace;
  font-size: 11px;
  letter-spacing: -.6px;
}

/* title + menu */
.titlebar {
  height: 22px;
  background: #fff;
  display: flex;
  align-items: center;
  padding-left: 2px;
}

.app-logo { width: 14px; height: 14px; margin-right: 7px; }

.title-text {
  color: #666;
  font-size: 12.6px;
  white-space: nowrap;
}

.win-btns { margin-left: auto; display: flex; }
.win-btns svg { width: 46px; height: 20px; }

.menubar {
  height: 30px;
  background: #fff;
  display: flex;
  border-bottom: 1px solid #d4d4d4;
}

.menu {
  width: 893px;
  display: flex;
  align-items: center;
  gap: 10.6px;
  padding-left: 13px;
  border-right: 1px solid #c8c8c8;
  white-space: nowrap;
}

.helper { display: flex; align-items: center; gap: 4px; }

.notice {
  width: 217px;
  padding: 7px 0 0 70px;
  color: #1c7a94;
  font-size: 11px;
  white-space: nowrap;
}

.account {
  flex: 1;
  display: flex;
  align-items: center;
  gap: 4px;
  padding-left: 9px;
  border-left: 2px dotted #bbb;
  white-space: nowrap;
}

.account .caret { margin: 0 2px 0 2px; }
.bell { margin-left: 6px; }
.chat { margin-left: 2px; }

/* toolbars */
.toolbar {
  display: flex;
  align-items: center;
  background: #f2f2f2;
  white-space: nowrap;
}

.main-tools {
  height: 30px;
  gap: 7px;
  padding-left: 3px;
  border-bottom: 1px solid #d8d8d8;
}

.grip {
  width: 3px;
  height: 22px;
  border-left: 2px dotted #c0c0c0;
  flex-shrink: 0;
}

.main-tools > .grip:first-child { margin-right: -3px; }
.main-tools > .grip { margin-right: -2px; }
.main-tools > .gap-l { margin: 0 -1px 0 0; }
.first .grip { margin-right: 1px; }
.dims .grip { margin-right: -2px; }
.second .grip { margin-right: 1px; }
.snap-left .grip { margin-right: 1px; }
.snap-right .grip { margin-right: 1px; }

.quick {
  display: flex;
  align-items: center;
  gap: 3px;
  margin-right: 9px;
}

.quick .sep { margin: 0 4px; }

.sep {
  width: 1px;
  height: 22px;
  background: #9a9a9a;
  flex-shrink: 0;
}

.caret {
  display: inline-block;
  width: 0;
  height: 0;
  border-left: 4px solid transparent;
  border-right: 4px solid transparent;
  border-top: 4px solid #333;
  flex-shrink: 0;
}

.caret.off { border-top-color: #aaa; }
.caret.small { border-width: 3px 3px 0; }

.tool {
  display: inline-flex;
  align-items: center;
  gap: 4px;
  height: 24px;
  flex-shrink: 0;
}

.tool .caret { margin-right: -4px; }
.tool .caret.small { margin: 0 0 0 -2px; }
.tool.off { color: #9a9a9a; }

.tool.hi {
  background: #cce4f7;
  border: 1px solid #90c8f0;
  padding: 0 3px;
}

.shift-a { margin-left: -3px; }
.nudge1 { margin-left: -1px; }
.nudge2 { margin-left: -2px; }
.nudge5 { margin-left: -5px; }

.sigma { font-weight: 400; font-size: 14px; width: 14px; text-align: center; }

.combo {
  display: inline-flex;
  height: 22px;
  flex-shrink: 0;
}

.combo em {
  flex: 1;
  background: #fff;
  font-style: normal;
  line-height: 22px;
  padding-left: 2px;
  overflow: hidden;
}

.arrow {
  width: 13px;
  background: #d8d8d8;
  border: 1px solid #aaa;
  display: flex;
  align-items: center;
  justify-content: center;
}

.arrow svg { width: 9px; height: 9px; }

.floor { width: 79px; margin-right: -3px; }
.c1 { width: 55px; }
.c2 { width: 68px; }
.c3 { width: 71px; }
.c4 { width: 53px; }
.c5 { width: 56px; }
.c5 em { color: #888; background: #f0f0f0; }
.c5 .arrow { background: #bbb; }

/* main area */
.workspace {
  height: 625px;
  display: grid;
  grid-template-columns: 204px 240px 1fr;
  padding-top: 1px;
  background: #f0f0f0;
}

.nav-panel, .comp-panel, .draw-panel {
  display: flex;
  flex-direction: column;
  min-width: 0;
  min-height: 0;
}

.nav-panel { margin-right: 5px; padding-bottom: 3px; }
.comp-panel { margin-right: 4px; padding-bottom: 2px; }
.draw-panel { background: #fafafa; }

.pane-head {
  height: 16px;
  margin-top: 1px;
  display: flex;
  align-items: center;
  justify-content: space-between;
  border: 1px solid #8f8f8f;
  border-width: 1px 0;
  background: #f3f3f3;
  line-height: 14px;
  flex-shrink: 0;
}

.pane-ctl { display: flex; gap: 8px; padding-right: 2px; }
.pane-ctl b { font: 400 12px/14px "DejaVu Sans", sans-serif; color: #333; width: 12px; text-align: center; }

.nav-btn {
  height: 21px;
  margin: 1px 0 0;
  padding: 0;
  background: #f3f3f3;
  border: 1px solid #b8b8b8;
  font: inherit;
  color: #222;
  flex-shrink: 0;
}

.tree-tools {
  height: 27px;
  background: #fff;
  display: flex;
  align-items: center;
  gap: 8px;
  padding-left: 8px;
  flex-shrink: 0;
}

.sq {
  width: 15px;
  height: 15px;
  background: linear-gradient(#d7e6f8, #fff);
  border: 1px solid #c6d8ef;
  display: block;
}

.sq svg { width: 13px; height: 13px; display: block; }

.tree {
  flex: 1;
  background: #fff;
  margin: 0 1px 0 2px;
  border: 2px solid #999;
  padding-top: 1px;
  overflow: hidden;
}

.node {
  height: 16px;
  display: flex;
  align-items: center;
  padding-left: 5px;
  line-height: 16px;
}

.chev { width: 10px; height: 10px; }
.dot { width: 4px; margin: 0 0 0 3px; border-top: 1px dotted #666; }
.node .ic16 { margin-right: 5px; }

.branch {
  margin-left: 11px;
  border-left: 1px dotted #777;
}

.twig {
  margin-left: 18px;
  border-left: 1px dotted #777;
}

.leaf {
  height: 16px;
  display: flex;
  align-items: center;
  line-height: 16px;
}

.leaf::before {
  content: "";
  width: 10px;
  margin-right: 1px;
  border-top: 1px dotted #777;
}

.leaf .ic16 { margin-right: 4px; }
.leaf.selected { position: relative; }
.sel-text { background: #d4d4d4; margin-left: -20px; padding-left: 20px; padding-right: 2px; line-height: 16px; }
.leaf.selected .ic16 { position: relative; z-index: 1; }

/* component list */
.list-tools {
  height: 27px;
  background: #fff;
  display: flex;
  align-items: center;
  gap: 7px;
  padding-left: 6px;
  flex-shrink: 0;
}

.list-tools .tool { gap: 2px; }

.search {
  height: 25px;
  display: flex;
  align-items: center;
  background: #fff;
  flex-shrink: 0;
}

.search-box {
  width: 210px;
  height: 24px;
  padding-left: 2px;
  line-height: 22px;
  color: #888;
  border: 1px solid #808080;
  font-size: 13px;
}

.search-btn {
  flex: 1;
  height: 24px;
  background: #ededed;
  display: flex;
  align-items: center;
  justify-content: center;
}

.comp-list {
  height: 203px;
  margin-top: 2px;
  background: #fff;
  border: 2px solid #a8a8a8;
  padding: 1px;
  flex-shrink: 0;
}

.list-row {
  display: grid;
  grid-template-columns: 26px 1fr;
  height: 19px;
  line-height: 18px;
}

.list-row .idx {
  background: #f0f0f0;
  border: 1px solid #ccc;
  border-top: 0;
  text-align: center;
  font-family: "Liberation Mono", monospace;
  font-size: 11px;
}

.list-row .name {
  padding-left: 19px;
  border: 1px solid #ccc;
  border-top: 0;
  border-left: 0;
}

.list-row.head { height: 21px; }
.list-row.head .idx { background: #f6f6f6; }

.list-row.head .name {
  padding: 0;
  background: linear-gradient(#fbd896, #f2be64);
  color: #6a006a;
  text-align: center;
  font-size: 12px;
  line-height: 20px;
}

.list-row.on .idx { background: #fbd28a; color: #6a006a; }
.list-row.on .name { background: #d6e8f8; }

.prop-head { margin-top: 5px; }

.prop-box {
  flex: 1;
  background: #fff;
  border: 2px solid #a8a8a8;
  padding: 1px 1px 1px 0;
  display: flex;
  justify-content: space-between;
  min-height: 0;
}

.props {
  width: 180px;
  height: 0;
  border-collapse: collapse;
  table-layout: fixed;
  flex-shrink: 0;
}

.props td, .props th {
  height: 21px;
  padding: 0;
  border: 1px solid #c4c4c4;
  font-weight: 400;
  white-space: nowrap;
  overflow: hidden;
}

.props td:first-child { width: 84px; padding-left: 21px; position: relative; }
.props td.val, .props th.gold { padding-left: 2px; }
.props tr.short td { height: 19px; }

.props th { text-align: left; padding-left: 2px; }
.props th:nth-child(1) { width: 84px; }
.props th:nth-child(2) { width: 64px; }
.props th:nth-child(3) { width: 32px; }
.props th.gold { background: linear-gradient(#fbd896, #f2be64); color: #6a006a; }

.blue { color: #0000ff; }
.gray { color: #8a8a8a; }
.props td.sel { background: #d6e8f8; }

.box {
  display: block;
  width: 13px;
  height: 13px;
  margin-left: 3px;
  border: 1px solid #333;
  background: #fff;
}

.box.lg { height: 15px; margin: 0 4px 0 0; flex-shrink: 0; }

.plus {
  position: absolute;
  left: 3px;
  top: 3px;
  width: 12px;
  height: 12px;
  border: 1px solid #aaa;
  font: 400 11px/9px "Liberation Mono", monospace;
  text-align: center;
  color: #222;
}

.vscroll {
  width: 15px;
  display: flex;
  flex-direction: column;
  align-items: center;
}

.vscroll svg { width: 10px; height: 10px; margin: 5px 0 1px; flex-shrink: 0; }
.thumb { width: 100%; height: 236px; background: #c9c9c9; }
.vscroll .end { margin-top: auto; margin-bottom: 3px; }

/* drawing side */
.strip-row {
  display: flex;
  gap: 2px;
  height: 28px;
  flex-shrink: 0;
}

.strip { height: 27px; gap: 4px; flex-shrink: 0; }
.first { width: 566px; padding-left: 1px; }
.dims { width: 335px; padding-left: 2px; gap: 8px; }
.dims .tool { gap: 3px; }
.second { width: 743px; height: 30px; padding-left: 2px; }
.second .sep { margin: 0 1px; }

.attr { width: 50px; margin-left: 5px; margin-right: -3px; }
.list-on { width: 74px; padding: 0 2px !important; gap: 5px; }
.smart { width: 84px; margin-right: -2px; }
.tri { margin-left: -2px; }

.drawing {
  flex: 1;
  display: flex;
  min-height: 0;
}

.side-tools {
  width: 26px;
  padding-top: 9px;
  display: flex;
  flex-direction: column;
  align-items: center;
  gap: 6px;
  background: #f6f6f6;
  flex-shrink: 0;
}

.hr { width: 19px; height: 1px; background: #999; flex-shrink: 0; }
.hr + .vtool { margin-top: 1px; }

.vtool {
  display: flex;
  flex-direction: column;
  align-items: center;
  gap: 2px;
}

.vtext {
  writing-mode: vertical-rl;
  text-orientation: upright;
  line-height: 14px;
}

.tick {
  width: 0;
  height: 0;
  border-top: 3px solid transparent;
  border-bottom: 3px solid transparent;
  border-right: 4px solid #222;
}

.more { width: 10px; height: 10px; margin-top: 4px; }

.canvas {
  position: relative;
  flex: 1;
  background: #000;
  overflow: hidden;
}

.plan { display: block; width: 896px; height: 534px; }

.axis-label text {
  font: 400 14px "Liberation Sans", sans-serif;
  text-anchor: middle;
}

.dim-label text {
  font: 400 15px "Liberation Sans", sans-serif;
  text-anchor: middle;
}

.ucs-label text { font: 400 13px "Liberation Sans", sans-serif; }

.hint {
  position: absolute;
  left: 444px;
  top: 265px;
  width: 190px;
  height: 32px;
  padding: 0 0 0 4px;
  background: #16165c;
  border: 1px solid #666;
  color: #7d7d7d;
  font-size: 12px;
  line-height: 15px;
  white-space: nowrap;
}

.dialog {
  position: absolute;
  left: 102px;
  top: 166px;
  width: 222px;
  height: 154px;
  border: 1px solid #4a94dc;
  background: #efefef;
  box-shadow: 2px 2px 8px rgba(0, 0, 0, .45);
}

.dlg-title {
  height: 25px;
  background: #fff;
  display: flex;
  align-items: center;
  justify-content: space-between;
  padding: 0 10px 0 3px;
  font-size: 12px;
}

.dlg-title svg { width: 11px; height: 11px; }

.dlg-body {
  padding: 51px 0 0 19px;
}

.dlg-field { display: flex; align-items: center; }
.dlg-field label { width: 85px; white-space: nowrap; }

.dlg-input {
  width: 101px;
  height: 20px;
  background: #fff;
  border: 1px solid #6d7b8a;
  padding-left: 2px;
  font: 400 11px/18px "Liberation Sans", sans-serif;
}

.dlg-input i { border-left: 1px solid #000; margin-left: 1px; }

.dlg-btns {
  display: flex;
  gap: 15px;
  margin: 22px 0 0 13px;
}

.dlg-btns button {
  width: 72px;
  height: 23px;
  padding: 0;
  background: #e0e0e0;
  border: 1px solid #adadad;
  font: inherit;
}

.snapbar {
  display: flex;
  gap: 65px;
  height: 31px;
  background: #f0f0f0;
  flex-shrink: 0;
}

.snap-left { width: 411px; height: 29px; gap: 3px; padding-left: 2px; border-right: 1px solid #ddd; }
.snap-right { width: 314px; height: 29px; gap: 4px; padding-left: 2px; border-right: 1px solid #ddd; }

.tool.tight { margin-left: -4px; }
.tool.vertex { gap: 1px; }

.fld-label { color: #666; flex-shrink: 0; font-size: 12px; font-family: "Liberation Sans", sans-serif; }
.fx { width: 18px; }
.fy { width: 43px; letter-spacing: .6px; }
.fm { width: 21px; }
.rot { color: #333; margin-right: 2px; flex-shrink: 0; }

.spin {
  display: inline-flex;
  width: 55px;
  height: 22px;
  flex-shrink: 0;
}

.spin em {
  flex: 1;
  background: #f0f0f0;
  border: 1px solid #e6e6e6;
  font: 400 12px/20px "Liberation Sans", sans-serif;
  text-align: right;
  padding-right: 3px;
  color: #777;
}

.spin b {
  width: 11px;
  background: linear-gradient(#eee 48%, #999 48%, #999 52%, #eee 52%);
  border: 1px solid #ddd;
}

.spin.wide { width: 64px; }

/* status + taskbar */
.statusbar {
  height: 21px;
  display: flex;
  background: #f0f0f0;
  border-top: 1px solid #dcdcdc;
  line-height: 19px;
  flex-shrink: 0;
}

.cell { border-right: 1px solid #d8d8d8; white-space: nowrap; overflow: hidden; flex-shrink: 0; }
.s1 { width: 149px; }
.s2 { width: 80px; padding-left: 1px; }
.s3 { width: 130px; padding-left: 1px; }
.s4 { width: 50px; padding-left: 1px; }
.s5 { width: 250px; }
.s6 { width: 487px; padding-left: 1px; }
.s7 { width: 70px; padding-left: 1px; }
.s8 { flex: 1; border-right: 0; }

.taskbar {
  flex: 1;
  display: flex;
  background: #04121c;
  color: #fff;
  min-height: 0;
}

.start {
  width: 48px;
  background: #000;
  display: flex;
  align-items: center;
  justify-content: center;
}

.task-search {
  width: 344px;
  background: #333;
  display: flex;
  align-items: center;
  padding-left: 9px;
  color: #8e8e8e;
  font-size: 13px;
}

.cortana { width: 20px; height: 20px; margin-right: 6px; }
.mic { width: 12px; height: 18px; margin-left: auto; margin-right: 15px; }

.task-apps { display: flex; width: 548px; padding-left: 2px; flex-shrink: 0; }

.app-i {
  position: relative;
  width: 49px;
  flex-shrink: 0;
  display: flex;
  align-items: center;
  justify-content: center;
}

.app-i:nth-child(3) { margin-left: 3px; }
.app-i svg { width: 24px; height: 24px; }

.app-i:nth-child(n+7)::after {
  content: "";
  position: absolute;
  left: 4px;
  right: 5px;
  bottom: 0;
  height: 2px;
  background: #7ab4e0;
}

.app-i.active { background: #1c2a32; }
.app-i.active::after { left: 0 !important; right: 1px !important; }

.task-cpu {
  width: 76px;
  margin-left: 39px;
  flex-shrink: 0;
  display: flex;
  flex-direction: column;
  align-items: center;
  justify-content: center;
  line-height: 17px;
  font-size: 12px;
  color: #ddd;
}

.tray {
  display: flex;
  align-items: center;
  gap: 8px;
  width: 191px;
  padding-left: 3px;
  flex-shrink: 0;
}

.tray svg { width: 16px; height: 16px; flex-shrink: 0; }
.tray .kbd { width: 24px; margin-left: 4px; }
.zh { font-size: 13px; margin: 0 5px 0 1px; }

.clock {
  position: relative;
  z-index: 1;
  width: 62px;
  flex-shrink: 0;
  display: flex;
  flex-direction: column;
  align-items: center;
  justify-content: center;
  line-height: 17px;
  color: #ddd;
  white-space: nowrap;
}

.action-center {
  position: relative;
  flex: 1;
  margin-left: -11px;
  background: #000;
  border-right: 2px solid #333;
  margin-right: 3px;
}

.action-center svg { position: absolute; left: 33px; top: 9px; width: 14px; height: 14px; }

.badge {
  position: absolute;
  left: 34px;
  top: 18px;
  width: 18px;
  height: 18px;
  border-radius: 50%;
  background: #333;
  border: 1px solid #777;
  font: 700 11px/16px "Liberation Sans", sans-serif;
  text-align: center;
}

/* overlays */
.gauge {
  position: absolute;
  left: 875px;
  top: -30px;
  width: 48px;
  height: 48px;
  border-radius: 50%;
  background: #3fc15f;
  border: 2px solid #cfe8d4;
  box-shadow: 0 3px 6px rgba(0, 0, 0, .4);
  color: #fff;
  font: 700 11px/14px "Liberation Sans", sans-serif;
  text-align: center;
}

.gauge span { position: absolute; left: 0; right: 0; bottom: 3px; }

.ime {
  position: absolute;
  left: 990px;
  top: 2px;
  display: flex;
  align-items: flex-start;
}

.ime-logo { position: relative; z-index: 1; width: 28px; height: 30px; }

.ime-bar {
  margin: 2px 0 0 -5px;
  width: 163px;
  height: 29px;
  display: flex;
  align-items: center;
  gap: 8px;
  padding-left: 9px;
  background: #f4f8fc;
  border: 1px solid #c5d5e5;
  color: #1a76c8;
}

.ime-bar b { font-size: 14px; }
.ime-bar .pun { width: 15px; font-size: 13px; }
.ime-bar svg { width: 16px; height: 16px; flex-shrink: 0; }

.ring {
  position: absolute;
  left: 745px;
  top: 95px;
  width: 136px;
  height: 64px;
}
```
